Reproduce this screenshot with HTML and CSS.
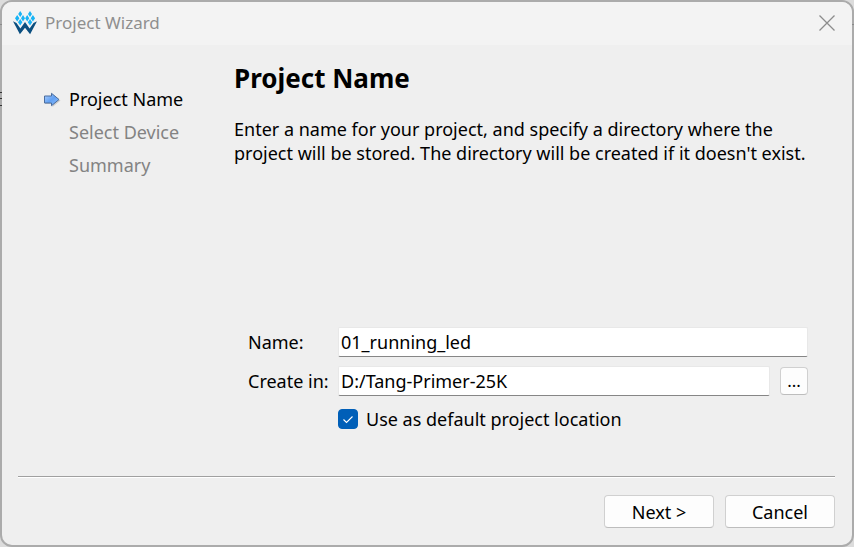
FILE: index.html
```
<!DOCTYPE html>
<html lang="en">
<head>
<meta charset="utf-8">
<title>Project Wizard</title>
<link rel="stylesheet" href="styles.css">
</head>
<body>
<main class="dialog">
  <header class="titlebar">
    <svg class="logo" viewBox="0 0 24 24" aria-hidden="true">
      <g fill="#19b4f5">
        <path d="M7.200 0l2 3-2 3-2-3zM17 0l2 3-2 3-2-3zM4.200 4l2.200 3.200-2.200 3.200-2.200-3.200zM10 4l2 3.200-2 3.200-2-3.200zM14.200 4l2 3.200-2 3.200-2-3.200zM19.900 4l2.200 3.200-2.200 3.200-2.200-3.200zM7.200 8l2.200 3.300-2.200 3.300-2.200-3.300zM17 8l2.200 3.300-2.200 3.300-2.200-3.300z"/>
      </g>
      <path fill="#0b4f80" d="M0 10.200l3.500 1.800 3.900 5.500 4.600-6.500 4.600 6.500 3.900-5.500 3.500-1.800-6.900 13-5.100-6.500-5.100 6.500z"/>
    </svg>
    <span class="caption">Project Wizard</span>
    <button class="close" type="button" aria-label="Close">
      <svg viewBox="0 0 16 16" aria-hidden="true"><path d="M.5.5l15 15M15.500.5l-15 15" fill="none" stroke="#8c8c8c" stroke-width="1.300"/></svg>
    </button>
  </header>
  <div class="body">
    <ol class="steps">
      <li class="step current" aria-current="step">
        <svg class="arrow" viewBox="0 0 18 16" aria-hidden="true">
          <defs><linearGradient id="blue" x1="0" y1="0" x2="1" y2="1"><stop offset="0" stop-color="#b4d4ff"/><stop offset=".5" stop-color="#62a0f2"/><stop offset="1" stop-color="#8fc0ff"/></linearGradient></defs>
          <path d="M2 5.500h7.500v-3l8 6-8 6.500v-3H2z" fill="#000" opacity=".15"/>
          <path d="M1.500 4h7v-2.700l7.500 6.200-7.500 6.200v-2.700h-7z" fill="url(#blue)" stroke="#4a6d9e"/>
        </svg>Project Name</li>
      <li class="step">Select Device</li>
      <li class="step">Summary</li>
    </ol>
    <section class="page">
      <h1 class="heading">Project Name</h1>
      <p class="intro">Enter a name for your project, and specify a directory where the project will be stored. The directory will be created if it doesn't exist.</p>
      <form class="form" id="wizard">
        <label for="name">Name:</label>
        <input class="field wide" id="name" type="text" value="01_running_led">
        <label for="dir">Create in:</label>
        <input class="field" id="dir" type="text" value="D:/Tang-Primer-25K">
        <button class="button browse" type="button" aria-label="Browse">...</button>
        <div class="option">
          <input class="check" id="default" type="checkbox" checked>
          <label for="default">Use as default project location</label>
        </div>
      </form>
    </section>
  </div>
  <footer class="footer">
    <button class="button" type="submit" form="wizard">Next &gt;</button>
    <button class="button" type="button">Cancel</button>
  </footer>
</main>
</body>
</html>
```
FILE: styles.css
```
* { box-sizing: border-box; }

body {
  position: relative;
  margin: 0;
  background: #dcdcdc;
  color: #000;
  font: 18px/24px "Noto Sans", "Open Sans", sans-serif;
}

/* Slivers of the window behind the dialog */
body::before,
body::after {
  content: "";
  position: absolute;
  top: 24px;
  width: 2px;
  height: 82px;
  background: linear-gradient(#8a8a8a, #8a8a8a) 0 0 / 2px 1px no-repeat;
}

body::before {
  left: 0;
  background:
    linear-gradient(#8a8a8a, #8a8a8a) 0 0 / 2px 1px no-repeat,
    linear-gradient(#333, #333) 0 68px / 2px 1px no-repeat,
    linear-gradient(#333, #333) 0 74px / 2px 1px no-repeat,
    linear-gradient(#333, #333) 0 81px / 2px 1px no-repeat;
}

body::after { right: 0; }

button, input { font: inherit; color: inherit; }

.dialog {
  display: flex;
  flex-direction: column;
  min-height: 100vh;
  border: 2px solid #ababab;
  border-radius: 12px;
  background: #efefef;
  overflow: hidden;
}

.titlebar {
  display: flex;
  align-items: center;
  height: 43px;
  padding: 0 17px 2px 11px;
  background: #f3f3f3;
  color: #8f8f8f;
}

.logo { width: 24px; height: 24px; }

.caption { flex: 1; margin-left: 8px; font-size: 17px; }

.close { display: flex; padding: 0; border: 0; background: none; }
.close svg { width: 16px; height: 16px; }

.body { flex: 1; display: flex; }

.steps {
  flex: none;
  width: 231px;
  margin: 0;
  padding: 38px 0 0 67px;
  list-style: none;
}

.step { position: relative; line-height: 33px; color: #838383; }
.step.current { color: #000; }

.arrow { position: absolute; left: -26px; top: 9px; width: 18px; height: 16px; }

.page {
  flex: 1;
  display: flex;
  flex-direction: column;
  padding: 15px 29px 0 1px;
}

.heading { margin: 0; font-size: 26px; line-height: 36px; }

.intro { margin: 21px 0 0; }

.form {
  display: grid;
  grid-template-columns: 80px 1fr 28px;
  gap: 9px 10px;
  align-items: center;
  margin: auto 15px 43px 14px;
  white-space: nowrap;
}

.field {
  width: 100%;
  min-width: 0;
  height: 30px;
  padding: 0 2px;
  border: 1px solid #e8e8e8;
  border-bottom-color: #868686;
  border-radius: 2px;
  background: #fff;
  outline: 0;
}

.wide { grid-column: 2 / 4; }

.button {
  width: 110px;
  height: 33px;
  padding: 0;
  border: 1px solid #d0d0d0;
  border-bottom-color: #bdbdbd;
  border-radius: 4px;
  background: #fdfdfd;
}

.browse { width: 28px; height: 28px; font-size: 17px; line-height: 24px; }

.option {
  grid-column: 2 / 4;
  display: flex;
  align-items: center;
  gap: 8px;
  height: 28px;
}

.check {
  appearance: none;
  width: 20px;
  height: 20px;
  margin: 0;
  border: 1px solid #868686;
  border-radius: 4px;
  background: #fff;
}

.check:checked {
  border-color: #005fb8;
  background: #005fb8 url("data:image/svg+xml,%3Csvg xmlns='http://www.w3.org/2000/svg' viewBox='0 0 18 18'%3E%3Cpath d='M4.500 9.500l3 3 6-6' fill='none' stroke='%23fff' stroke-width='1.100'/%3E%3C/svg%3E") center / 18px 18px no-repeat;
}

.footer {
  display: flex;
  justify-content: flex-end;
  gap: 11px;
  margin: 0 17px 17px 16px;
  padding-top: 18px;
  border-top: 1px solid #a0a0a0;
  box-shadow: inset 0 1px #fff;
}
```
